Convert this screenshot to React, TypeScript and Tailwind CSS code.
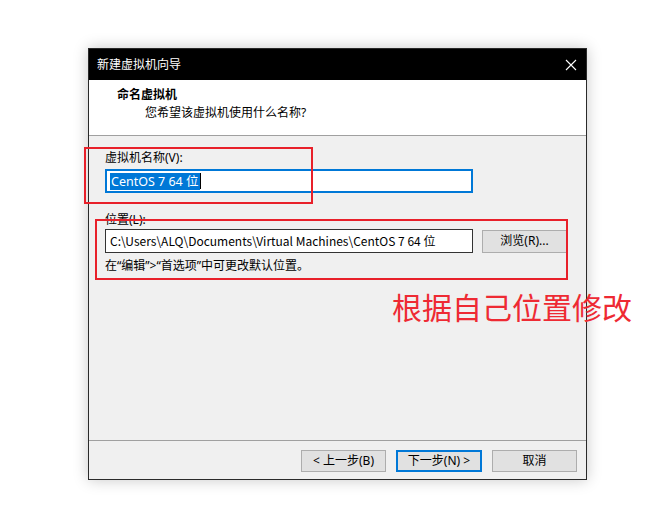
import React from 'react';

const cjk = { fontFamily: '"Noto Sans", "Noto Sans CJK SC", sans-serif' };

const WizardDialog: React.FC = () => {
  return (
    <div className="w-[499px] h-[432px] flex flex-col bg-[#f0f0f0] border border-[#2a2a2a] shadow-[0_0_14px_rgba(0,0,0,0.22)]">
      {/* Title bar */}
      <div className="h-[31px] bg-black flex items-center justify-between pl-[8px] pr-[9px]">
        <span className="text-white text-[12px]">新建虚拟机向导</span>
        <svg width="12" height="12" viewBox="0 0 12 12" className="text-white">
          <path d="M1 1 L11 11 M11 1 L1 11" stroke="currentColor" strokeWidth="1.1" />
        </svg>
      </div>

      {/* Header */}
      <div className="h-[56px] bg-white border-b border-[#a0a0a0] pl-[28px] pt-[6px]">
        <div className="text-[12px] font-bold text-black leading-[18px]">命名虚拟机</div>
        <div className="text-[12px] text-black leading-[18px] pl-[28px]">您希望该虚拟机使用什么名称?</div>
      </div>

      {/* Body */}
      <div className="flex-1 pl-[16px] pr-[19px] pt-[14px]">
        <div className="text-[12px] leading-[16px] text-black">虚拟机名称(V):</div>
        <div className="mt-[3px] w-[368px] h-[24px] bg-white border-2 border-[#0078d7] flex items-center pl-[3px]">
          <span className="bg-[#0078d7] text-white text-[12.5px] leading-[17px] px-[1px]">CentOS 7 64 位</span>
          <span className="w-px h-[16px] bg-black" />
        </div>

        <div className="mt-[19px] text-[12px] leading-[16px] text-black">位置(L):</div>
        <div className="mt-[1px] flex items-center gap-[9px]">
          <div className="w-[368px] h-[24px] bg-white border border-[#333] flex items-center pl-[4px] text-[12px] text-black whitespace-nowrap overflow-hidden font-['Noto_Sans_CJK_SC',sans-serif]">
            C:\Users\ALQ\Documents\Virtual Machines\CentOS 7 64 位
          </div>
          <button className="w-[85px] h-[23px] bg-[#e1e1e1] border border-[#adadad] text-[12px] text-black">
            浏览(R)...
          </button>
        </div>
        <div className="mt-[5px] text-[12px] leading-[16px] text-black">在“编辑”&gt;“首选项”中可更改默认位置。</div>
      </div>

      {/* Footer */}
      <div className="h-[39px] border-t border-[#a0a0a0] flex items-start justify-end gap-[10px] pt-[9px] pr-[9px]">
        <button className="w-[85px] h-[22px] bg-[#e1e1e1] border border-[#adadad] text-[12px] text-black">
          &lt; 上一步(B)
        </button>
        <button className="w-[86px] h-[22px] bg-[#e1e1e1] border-2 border-[#0078d7] text-[12px] text-black">
          下一步(N) &gt;
        </button>
        <button className="w-[85px] h-[22px] bg-[#e1e1e1] border border-[#adadad] text-[12px] text-black">
          取消
        </button>
      </div>
    </div>
  );
};

export default function App() {
  return (
    <div className="relative w-[667px] h-[531px] bg-white overflow-hidden" style={cjk}>
      <div className="pl-[88px] pt-[48px]">
        <WizardDialog />
      </div>

      {/* Annotations */}
      <div className="absolute left-[84px] top-[147px] w-[229px] h-[57px] border-2 border-[#e8202a]" />
      <div className="absolute left-[95px] top-[219px] w-[473px] h-[61px] border-2 border-[#e8202a]" />
      <div className="absolute left-[392px] top-[288px] text-[30px] leading-[40px] text-[#ee2a33] whitespace-nowrap">
        根据自己位置修改
      </div>
    </div>
  );
}
